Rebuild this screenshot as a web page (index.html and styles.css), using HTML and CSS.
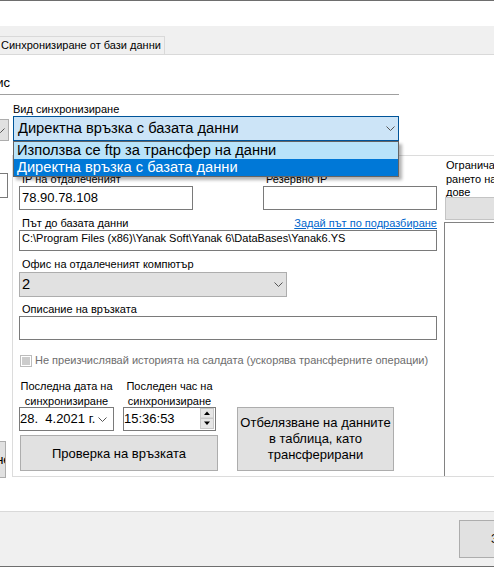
FILE: index.html
```html
<!DOCTYPE html>
<html lang="bg">
<head>
<meta charset="utf-8">
<title>Синхронизиране</title>
<link rel="stylesheet" href="styles.css">
</head>
<body>
<div class="win">
  <div class="topgap"></div>
  <div class="tabs"><div class="tab">Синхронизиране от бази данни</div></div>
  <div class="content">
    <div class="hdr"><span class="hdr-text">Офис</span></div>
    <div class="main">
      <div class="edge">
        <div class="edge-combo"><svg class="chev" width="9" height="5" viewBox="0 0 9 5"><path d="M0.5 0.5 L4.5 4.5 L8.5 0.5" fill="none" stroke="#555" stroke-width="1"/></svg></div>
        <div class="edge-input"></div>
        <div class="edge-btn">Запазване</div>
      </div>
      <div class="pane">
        <div class="lbl sync-lbl">Вид синхронизиране</div>
        <div class="combo sync">
          <span>Директна връзка с базата данни</span>
          <svg class="chev" width="9" height="5" viewBox="0 0 9 5"><path d="M0.5 0.5 L4.5 4.5 L8.5 0.5" fill="none" stroke="#555" stroke-width="1"/></svg>
          <ul class="droplist">
            <li class="hover">Използва се ftp за трансфер на данни</li>
            <li class="sel">Директна връзка с базата данни</li>
          </ul>
        </div>
        <div class="group">
          <div class="gmain">
            <div class="r1">
              <div class="lbl">IP на отдалеченият</div>
              <div class="lbl">Резервно IP</div>
              <div class="inp ip">78.90.78.108</div>
              <div class="inp ip"></div>
            </div>
            <div class="r2">
              <span class="lbl">Път до базата данни</span>
              <span class="link">Задай път по подразбиране</span>
            </div>
            <div class="inp path">C:\Program Files (x86)\Yanak Soft\Yanak 6\DataBases\Yanak6.YS</div>
            <div class="lbl r3lbl">Офис на отдалеченият компютър</div>
            <div class="combo office">
              <span>2</span>
              <svg class="chev" width="9" height="5" viewBox="0 0 9 5"><path d="M0.5 0.5 L4.5 4.5 L8.5 0.5" fill="none" stroke="#555" stroke-width="1"/></svg>
            </div>
            <div class="lbl r4lbl">Описание на връзката</div>
            <div class="inp desc"></div>
            <div class="chk-row">
              <span class="chk"><span class="chk-fill"></span></span>
              <span>Не преизчислявай историята на салдата (ускорява трансферните операции)</span>
            </div>
            <div class="sync-grid">
              <div class="glbl dl">Последна дата на<br>синхронизиране</div>
              <div class="glbl tl">Последен час на<br>синхронизиране</div>
              <div class="inp picker date"><span class="pv">28.  4.2021 г.</span><svg class="chev" width="9" height="5" viewBox="0 0 9 5"><path d="M0.5 0.5 L4.5 4.5 L8.5 0.5" fill="none" stroke="#555" stroke-width="1"/></svg></div>
              <div class="inp picker time"><span class="pv">15:36:53</span>
                <svg class="spin" width="14" height="21" viewBox="0 0 14 21">
                  <rect x="0.5" y="0.5" width="13" height="9.5" fill="#e6e6e6" stroke="#c8c8c8"/>
                  <rect x="0.5" y="10.5" width="13" height="10" fill="#e6e6e6" stroke="#c8c8c8"/>
                  <path d="M4 7 L7 3.5 L10 7 Z" fill="#000"/>
                  <path d="M4 13.5 L7 17 L10 13.5 Z" fill="#000"/>
                </svg>
              </div>
              <div class="btn mark">Отбелязване на данните<br>в таблица, като<br>трансферирани</div>
              <div class="btn check">Проверка на връзката</div>
            </div>
          </div>
          <div class="gside">
            <div class="side-lbl">Ограничаване на<br>рането на запи-<br>дове</div>
            <div class="side-box"></div>
            <div class="side-list"></div>
          </div>
        </div>
      </div>
    </div>
  </div>
  <div class="footer"><div class="fbtn">Запис</div></div>
</div>
</body>
</html>
```

FILE: styles.css
```css
* { box-sizing: border-box; }
html, body { margin: 0; padding: 0; }
body {
  width: 494px;
  height: 567px;
  overflow: hidden;
  background: #fff;
  font-family: "Liberation Sans", Arial, sans-serif;
  font-size: 11px;
  color: #000;
}
.win {
  border-top: 1px solid #6e6e6e;
  height: 567px;
  display: flex;
  flex-direction: column;
}
.topgap { height: 25px; flex: none; }
.tabs {
  height: 29px;
  flex: none;
  background: #f0f0f0;
  border-bottom: 1px solid #d9d9d9;
  display: flex;
  align-items: flex-end;
}
.tab {
  height: 18px;
  border-top: 1px solid #d9d9d9;
  border-right: 1px solid #d9d9d9;
  padding: 0 3px 0 1px;
  line-height: 17px;
  font-size: 11px;
  white-space: nowrap;
}
.content {
  height: 457px;
  flex: none;
  border-bottom: 1px solid #d9d9d9;
  overflow: hidden;
}
.hdr {
  height: 40px;
  width: 399px;
  border-bottom: 1px solid #a0a0a0;
  padding-top: 20px;
  font-size: 13px;
  line-height: 15px;
}
.hdr-text {
  display: block;
  width: 40px;
  margin-left: -30px;
  text-align: right;
  white-space: nowrap;
}
.main {
  display: grid;
  grid-template-columns: 12px 482px;
  height: 416px;
}
.edge {
  overflow: hidden;
  display: flex;
  flex-direction: column;
  align-items: flex-start;
}
.edge-combo {
  margin-top: 24px;
  height: 22px;
  width: 40px;
  margin-left: -31px;
  flex: none;
  border: 1px solid #adadad;
  background: #e1e1e1;
  display: flex;
  justify-content: flex-end;
  align-items: center;
  padding-right: 3px;
}
.edge-input {
  margin-top: 32px;
  height: 25px;
  width: 40px;
  margin-left: -32px;
  flex: none;
  border: 1px solid #7a7a7a;
  background: #fff;
}
.edge-btn {
  margin-top: 243px;
  height: 37px;
  width: 60px;
  margin-left: -54px;
  flex: none;
  border: 1px solid #adadad;
  background: #e1e1e1;
  font-size: 13px;
  line-height: 35px;
  text-align: right;
  white-space: nowrap;
  overflow: hidden;
}
.pane { display: flex; flex-direction: column; }
.lbl { padding-left: 3px; line-height: 13px; white-space: nowrap; }
.sync-lbl { margin-top: 8px; padding-left: 1px; }
.combo {
  position: relative;
  display: flex;
  align-items: center;
  justify-content: space-between;
  white-space: nowrap;
}
.chev { display: block; flex: none; }
.sync {
  margin-left: 1px;
  width: 386px;
  height: 25px;
  background: #cce4f7;
  border: 1px solid #005499;
  padding: 0 3px 0 4px;
  font-size: 14.67px;
  line-height: 23px;
}
.droplist {
  position: absolute;
  left: -1px;
  top: calc(100% + 1px);
  width: 386px;
  margin: 0;
  padding: 0;
  list-style: none;
  border: 1px solid #646464;
  background: #fff;
  box-shadow: 3px 3px 3px rgba(0, 0, 0, 0.3);
  z-index: 5;
}
.droplist li {
  height: 17px;
  line-height: 17px;
  padding-left: 3px;
  font-size: 14.67px;
}
.droplist .hover { background: #b8e3fa; }
.droplist .sel { background: #0078d7; color: #fff; }
.group {
  margin-top: 14px;
  height: 322px;
  border: 1px solid #dcdcdc;
  border-right: none;
  display: grid;
  grid-template-columns: 431px 60px;
}
.gmain {
  padding: 16px 0 0 6px;
  display: flex;
  flex-direction: column;
}
.r1 {
  display: grid;
  grid-template-columns: 174px 174px;
  column-gap: 70px;
}
.r1 .lbl { line-height: 14px; }
.inp { border: 1px solid #7a7a7a; background: #fff; white-space: nowrap; overflow: hidden; }
.ip { height: 24px; font-size: 13px; line-height: 22px; padding-left: 2px; }
.r2 {
  margin-top: 7px;
  width: 418px;
  display: flex;
  justify-content: space-between;
  line-height: 13px;
}
.link { color: #0066cc; text-decoration: underline; }
.path { width: 418px; height: 21px; padding: 1px 0 0 2px; line-height: 13px; }
.r3lbl { margin-top: 7px; }
.office {
  margin-top: 1px;
  width: 268px;
  height: 25px;
  background: #e1e1e1;
  border: 1px solid #adadad;
  padding: 0 3px 0 2px;
  font-size: 14.67px;
  line-height: 23px;
}
.r4lbl { margin-top: 6px; }
.desc { width: 418px; height: 24px; }
.chk-row {
  margin-top: 14px;
  padding-left: 1px;
  display: flex;
  align-items: flex-start;
  line-height: 13px;
  color: #6d6d6d;
  white-space: nowrap;
}
.chk {
  width: 12px;
  height: 12px;
  margin: 1px 3px 0 0;
  border: 1px solid #bcbcbc;
  background: #fff;
  padding: 1px;
  flex: none;
}
.chk-fill { display: block; width: 100%; height: 100%; background: #cccccc; }
.sync-grid {
  margin-top: 12px;
  display: grid;
  grid-template-columns: 95px 9px 93px 21px 157px;
  grid-template-rows: 28px 24px 4px 36px;
}
.glbl { text-align: center; line-height: 15px; white-space: nowrap; }
.dl { grid-column: 1; grid-row: 1; }
.tl { grid-column: 3; grid-row: 1; }
.picker {
  display: flex;
  align-items: center;
  justify-content: space-between;
  font-size: 13px;
  line-height: 22px;
}
.pv { white-space: pre; }
.date { grid-column: 1; grid-row: 2; padding-right: 6px; }
.time { grid-column: 3; grid-row: 2; align-items: flex-start; }
.spin { display: block; margin: 0 1px 0 0; }
.btn {
  background: #e1e1e1;
  border: 1px solid #adadad;
  font-size: 13px;
  text-align: center;
  display: flex;
  align-items: center;
  justify-content: center;
}
.mark { grid-column: 5; grid-row: 2 / 5; line-height: 16px; padding-bottom: 1px; }
.check { grid-column: 1 / 4; grid-row: 4; margin-left: 1px; width: 198px; }
.gside { display: flex; flex-direction: column; overflow: hidden; }
.side-lbl {
  height: 41px;
  padding: 3px 0 0 2px;
  line-height: 13.5px;
  white-space: nowrap;
  flex: none;
}
.side-box {
  margin-left: 1px;
  height: 23px;
  flex: none;
  background: #e1e1e1;
  border: 1px solid #c4c4c4;
  border-right: none;
}
.side-list {
  margin-top: 2px;
  flex: 1;
  border: 1px solid #828282;
  border-right: none;
  border-bottom: none;
  background: #fff;
}
.footer {
  height: 55px;
  flex: none;
  background: #f0f0f0;
  border-bottom: 1px solid #6e6e6e;
  padding: 8px 0 0 459px;
}
.fbtn {
  width: 100px;
  height: 38px;
  background: #e1e1e1;
  border: 1px solid #adadad;
  font-size: 12px;
  line-height: 36px;
  padding-left: 31px;
  white-space: nowrap;
}
```
